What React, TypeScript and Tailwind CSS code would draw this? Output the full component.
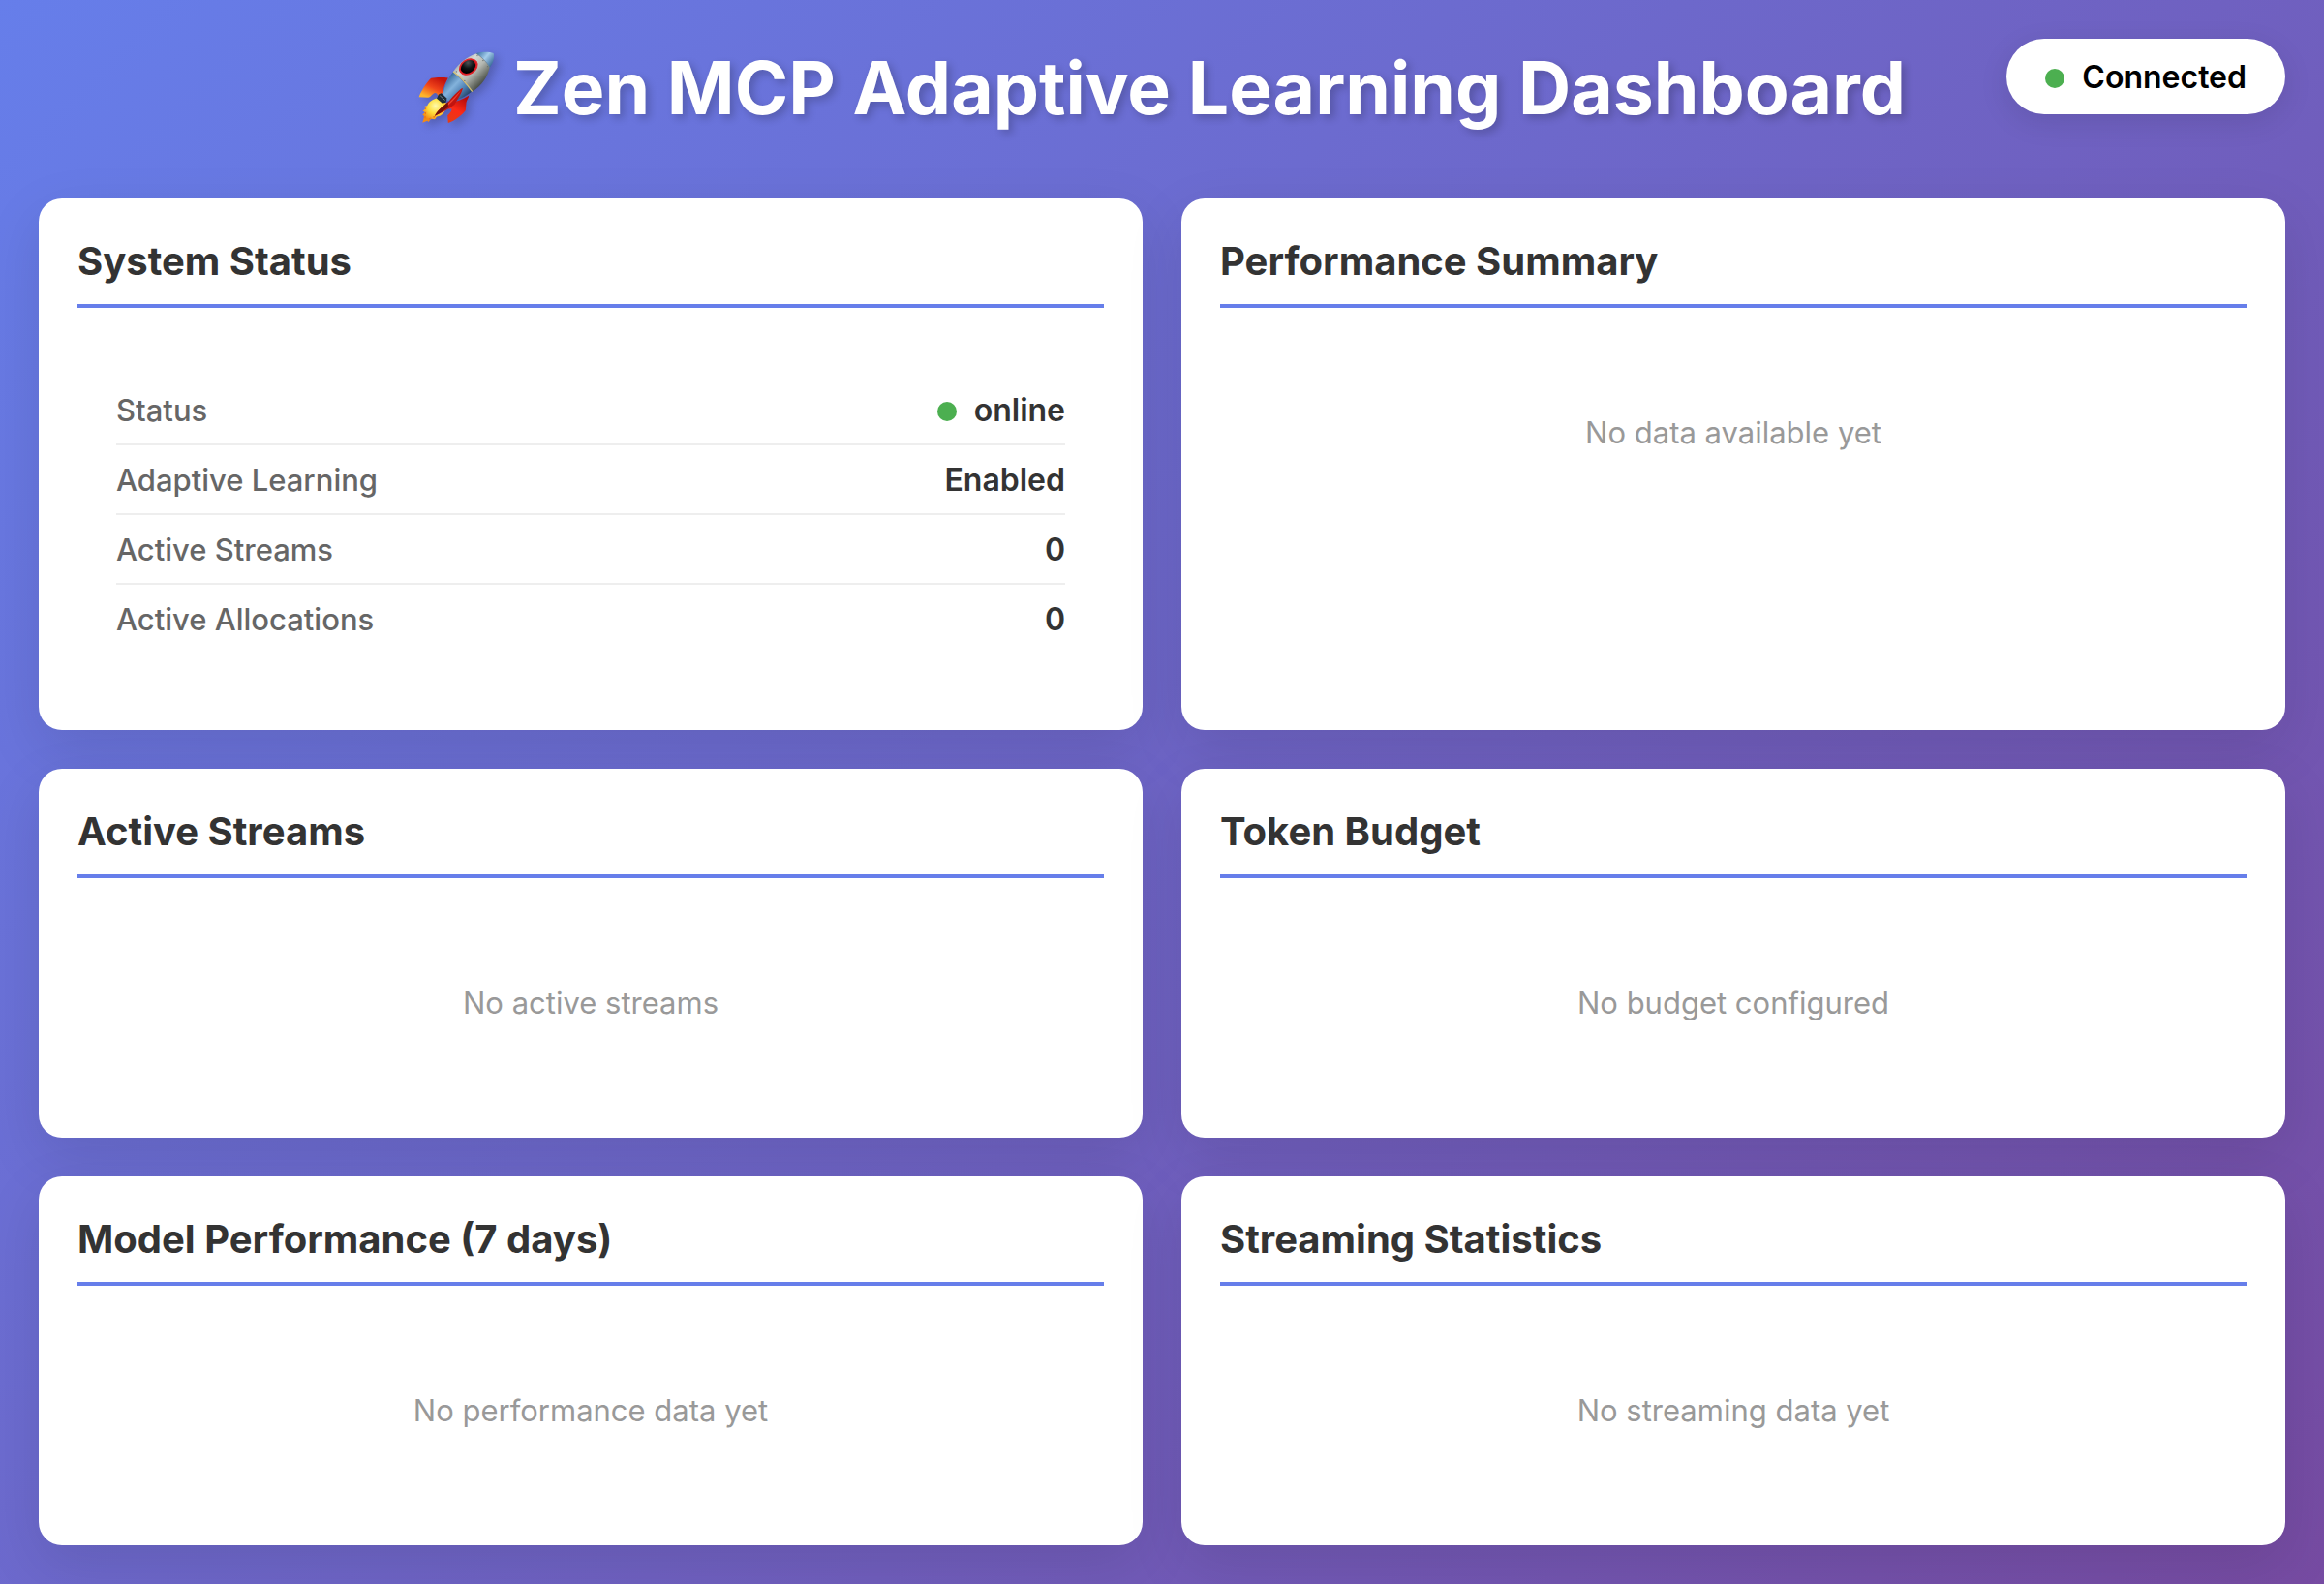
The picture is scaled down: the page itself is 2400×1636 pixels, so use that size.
import type { ReactNode } from "react";

function Rocket() {
  return (
    <svg
      viewBox="52 62 244 244"
      className="h-20 w-20 shrink-0 drop-shadow-[4px_4px_4px_rgba(0,0,0,0.2)]"
      role="img"
      aria-label="Rocket"
    >
      <defs>
        <linearGradient id="hull" x1="170" y1="100" x2="245" y2="175" gradientUnits="userSpaceOnUse">
          <stop offset="0" stopColor="#8f9a9c" />
          <stop offset="0.3" stopColor="#d6d9d5" />
          <stop offset="0.6" stopColor="#b4b8b2" />
          <stop offset="1" stopColor="#4c5148" />
        </linearGradient>
        <linearGradient id="nose" x1="240" y1="72" x2="288" y2="112" gradientUnits="userSpaceOnUse">
          <stop offset="0" stopColor="#3f76a8" />
          <stop offset="0.45" stopColor="#a5cdec" />
          <stop offset="1" stopColor="#2c5f8f" />
        </linearGradient>
        <linearGradient id="base" x1="138" y1="150" x2="205" y2="215" gradientUnits="userSpaceOnUse">
          <stop offset="0" stopColor="#2f5f92" />
          <stop offset="0.4" stopColor="#83b3dc" />
          <stop offset="0.7" stopColor="#4d7fb2" />
          <stop offset="1" stopColor="#1d3a5c" />
        </linearGradient>
        <linearGradient id="finLeft" x1="115" y1="152" x2="85" y2="214" gradientUnits="userSpaceOnUse">
          <stop offset="0" stopColor="#c4120c" />
          <stop offset="0.5" stopColor="#f0441a" />
          <stop offset="1" stopColor="#ffb52a" />
        </linearGradient>
        <linearGradient id="finRight" x1="195" y1="215" x2="150" y2="292" gradientUnits="userSpaceOnUse">
          <stop offset="0" stopColor="#b80d0b" />
          <stop offset="0.5" stopColor="#fb2a17" />
          <stop offset="1" stopColor="#e33d16" />
        </linearGradient>
        <radialGradient id="flame" cx="106" cy="240" r="48" gradientUnits="userSpaceOnUse">
          <stop offset="0" stopColor="#fffbb0" />
          <stop offset="0.5" stopColor="#ffdf3a" />
          <stop offset="1" stopColor="#f28a14" />
        </radialGradient>
        <radialGradient id="glass" cx="216" cy="106" r="30" gradientUnits="userSpaceOnUse">
          <stop offset="0" stopColor="#4b5357" />
          <stop offset="0.6" stopColor="#101416" />
          <stop offset="1" stopColor="#000000" />
        </radialGradient>
      </defs>
      <path
        d="M112 216 C98 218 84 228 80 240 L70 242 L75 249 L66 256 L73 260 L65 268 L71 273 L65 293 L80 287 L84 291 L92 281 L104 282 L110 274 L120 272 C134 264 142 248 141 232 Z"
        fill="url(#flame)"
      />
      <path d="M72 244 l6 3 -3 6z M70 262 l7 -3 -1 9z M68 276 l8 -5 -1 10z M84 280 l9 -4 -5 9z M98 274 l9 -3 -6 8z" fill="#f07812" />
      <path
        d="M92 153 C108 150 130 150 146 152 C138 166 130 184 128 200 L114 208 C112 202 108 198 102 200 C94 204 90 213 83 214 L54 212 C62 192 76 168 92 153 Z"
        fill="url(#finLeft)"
      />
      <path
        d="M211 208 C212 214 204 222 203 230 L201 254 C188 270 168 286 146 294 L144 270 C152 264 158 256 157 249 L148 250 L148 232 C170 229 192 220 211 208 Z"
        fill="url(#finRight)"
      />
      <path d="M162 132 C146 152 134 178 130 203 L144 224 C176 226 202 210 222 193 Z" fill="url(#base)" />
      <path d="M116 204 L124 200 L142 216 L139 229 L128 232 L110 217 Z" fill="#1f2c34" />
      <path d="M120 208 L136 222" stroke="#6f8793" strokeWidth="3" />
      <path
        d="M162 132 C180 106 206 84 236 75 C250 84 266 98 277 116 C272 148 252 176 222 195 C204 170 184 148 162 132 Z"
        fill="url(#hull)"
      />
      <path d="M162 132 C184 148 204 170 222 195" fill="none" stroke="#d2c071" strokeWidth="4" />
      <path d="M234 75 C252 69 274 69 289 74 C293 90 287 106 277 119 C267 101 252 86 234 75 Z" fill="url(#nose)" />
      <path d="M234 75 C252 86 267 101 277 119" fill="none" stroke="#6f7f88" strokeWidth="2" />
      <path
        d="M192 184 C186 184 164 206 148 226 C130 240 108 258 104 272 C124 262 148 250 166 236 C174 222 190 198 192 184 Z"
        fill="#c01410"
      />
      <path d="M189 188 C174 204 150 232 112 264 C136 246 160 232 189 188 Z" fill="#f0402c" />
      <path d="M146 228 C128 242 110 256 104 272 C122 262 134 252 146 244 Z" fill="#6f1409" />
      <ellipse cx="210" cy="117" rx="32" ry="24" transform="rotate(-32 210 117)" fill="#d8141c" />
      <ellipse cx="210" cy="117" rx="30" ry="22" transform="rotate(-32 210 117)" fill="none" stroke="#f0565a" strokeWidth="1" />
      <ellipse cx="209" cy="117" rx="25" ry="19" transform="rotate(-36 209 117)" fill="url(#glass)" />
      <g fill="#6b706c">
        <circle cx="172" cy="132" r="2" />
        <circle cx="198" cy="161" r="2" />
        <circle cx="222" cy="184" r="2" />
        <circle cx="238" cy="82" r="2" />
        <circle cx="256" cy="97" r="2" />
        <circle cx="270" cy="116" r="2" />
      </g>
    </svg>
  );
}

function StatusDot() {
  return <span className="mr-[18px] inline-block h-5 w-5 rounded-full bg-[#4caf50]" />;
}

function Card({ title, children }: { title: string; children: ReactNode }) {
  return (
    <section className="rounded-3xl bg-white p-10 shadow-[0_20px_60px_rgba(0,0,0,0.1)]">
      <h2 className="mb-[30px] border-b-4 border-[#667eea] pb-5 text-[40px] leading-[49px] font-bold text-[#333]">
        {title}
      </h2>
      {children}
    </section>
  );
}

function Empty({ children }: { children: ReactNode }) {
  return <p className="p-20 text-center text-[#999]">{children}</p>;
}

const metrics = [
  { label: "Status", value: "online", dot: true },
  { label: "Adaptive Learning", value: "Enabled" },
  { label: "Active Streams", value: "0" },
  { label: "Active Allocations", value: "0" },
];

export default function App() {
  return (
    <div className="relative min-h-screen bg-linear-[135deg,#667eea_0%,#764ba2_100%] p-10 font-['Inter',sans-serif] text-[31px] leading-[38px] text-black">
      <header className="flex items-center justify-center gap-[18px] pt-[3px] pb-[66px]">
        <Rocket />
        <h1 className="text-[75px] leading-[96px] font-bold text-white [text-shadow:4px_4px_8px_rgba(0,0,0,0.2)]">
          Zen MCP Adaptive Learning Dashboard
        </h1>
      </header>

      <div
        role="status"
        className="absolute top-10 right-10 rounded-full bg-white px-10 pt-[21px] pb-[19px] text-[32px] leading-[38px] font-semibold shadow-[0_8px_30px_rgba(0,0,0,0.1)]"
      >
        <StatusDot />
        Connected
      </div>

      <main className="grid grid-cols-2 gap-10">
        <Card title="System Status">
          <dl className="p-10">
            {metrics.map((m) => (
              <div
                key={m.label}
                className="flex justify-between border-b-2 border-[#eee] pt-[17px] pb-[15px] last:border-b-0"
              >
                <dt className="font-medium text-[#666]">{m.label}</dt>
                <dd className="text-[32px] leading-[38px] font-semibold text-[#333]">
                  {m.dot && <StatusDot />}
                  {m.value}
                </dd>
              </div>
            ))}
          </dl>
        </Card>
        <Card title="Performance Summary">
          <Empty>No data available yet</Empty>
        </Card>
        <Card title="Active Streams">
          <Empty>No active streams</Empty>
        </Card>
        <Card title="Token Budget">
          <Empty>No budget configured</Empty>
        </Card>
        <Card title="Model Performance (7 days)">
          <Empty>No performance data yet</Empty>
        </Card>
        <Card title="Streaming Statistics">
          <Empty>No streaming data yet</Empty>
        </Card>
      </main>
    </div>
  );
}
